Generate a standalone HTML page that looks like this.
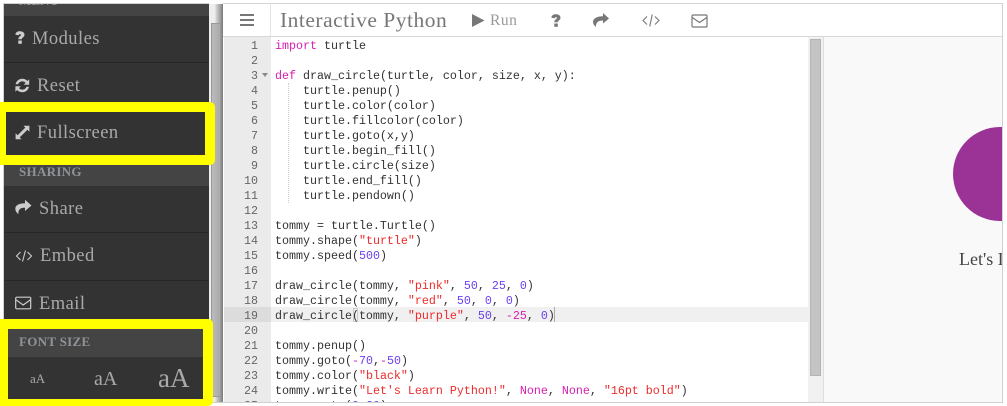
<!DOCTYPE html>
<html><head><meta charset="utf-8">
<style>
html,body{margin:0;padding:0;background:#fff}
#p{position:relative;width:1007px;height:406px;overflow:hidden;background:#fff;font-family:"Liberation Serif",serif}
#p div,#p svg{position:absolute}
.nav{color:#aaa;font-size:18.5px;letter-spacing:.45px;line-height:24px;white-space:nowrap}
.hd{color:#8f9499;font-size:13px;font-weight:bold;letter-spacing:.3px;line-height:16px;white-space:nowrap}
.ln{left:224px;width:34px;text-align:right;font:11.67px/15px "Liberation Mono",monospace;color:#666}
#code{left:275px;top:38px;font:11.67px/15px "Liberation Mono",monospace;color:#333;white-space:pre;margin:0}
.k{color:#d81eb0}.s{color:#ee2b2b}.n{color:#6b3ff0}
</style></head><body><div id="p">
<div style="left:4px;top:3px;width:205px;height:1px;background:#d0d0d0"></div>
<div style="left:3px;top:3px;width:1px;height:403px;background:#d0d0d0"></div>
<div style="left:4px;top:4px;width:205px;height:398px;background:#333"></div>
<div style="left:4px;top:4px;width:205px;height:12px;background:#444;overflow:hidden">
  <div style="left:15px;top:-11px;color:#8f9499;font-size:13px;font-weight:bold;letter-spacing:.1px;line-height:16px">MENU</div>
</div>
<div style="left:4px;top:62px;width:205px;height:1px;background:#272727"></div>
<div style="left:4px;top:165px;width:205px;height:21px;background:#444"></div>
<div style="left:4px;top:232px;width:205px;height:1px;background:#272727"></div>
<div style="left:4px;top:280px;width:205px;height:1px;background:#272727"></div>

<!-- sidebar scrollbar -->
<div style="left:209px;top:4px;width:14px;height:398px;background:linear-gradient(90deg,#eee 0,#eee 40%,#ccc 55%,#999 85%,#777 100%)"></div>
<div style="left:211px;top:23px;width:10px;height:374px;background:linear-gradient(90deg,#bbb,#aaa);border:1px solid #999;box-sizing:border-box"></div>
<div style="left:4px;top:402px;width:219px;height:1px;background:#d0d0d0"></div>

<!-- yellow boxes -->
<div style="left:-6px;top:102px;width:221px;height:63px;background:#ff0;border-radius:5px"></div>
<div style="left:6px;top:112px;width:199px;height:43px;background:#333"></div>
<div style="left:-6px;top:319px;width:219px;height:87px;background:#ff0;border-radius:5px"></div>
<div style="left:8px;top:329px;width:195px;height:28px;background:#444"></div>
<div style="left:8px;top:357px;width:195px;height:42px;background:#333"></div>

<div class="nav" style="left:32px;top:27px">Modules</div>
<div class="nav" style="left:37px;top:74px">Reset</div>
<div class="nav" style="left:37px;top:121px">Fullscreen</div>
<div class="hd" style="left:19px;top:164px">SHARING</div>
<div class="nav" style="left:39px;top:197px">Share</div>
<div class="nav" style="left:40px;top:244px">Embed</div>
<div class="nav" style="left:39px;top:292px">Email</div>
<div class="hd" style="left:19px;top:334px">FONT SIZE</div>
<div style="left:30px;top:371px;color:#aaa;font-size:13px;line-height:16px">aA</div>
<div style="left:94px;top:367px;color:#aaa;font-size:20px;line-height:24px">aA</div>
<div style="left:158px;top:362px;color:#aaa;font-size:27px;line-height:32px">aA</div>

<!-- sidebar icons -->
<svg style="left:15px;top:31px" width="10" height="13" viewBox="0 0 10 13"><path d="M.3 3.600C.8 1.200 2.600 .3 4.700 .3C7.500 .3 9.500 1.600 9.500 3.800C9.500 6.300 6.800 6.500 6.800 8.300H3.300C3.300 5.500 5.900 5.300 5.900 3.900C5.900 2.800 3.900 2.800 3.600 4.400Z" fill="#ccc"/><rect x="3.300" y="9.500" width="3.500" height="3.300" fill="#ccc"/></svg>
<svg style="left:15px;top:78px" width="15" height="15" viewBox="0 0 15 15"><path d="M.6 6.300C1.300 2.900 4 .8 7.300 .8C9.500 .8 11.200 1.700 12.500 3L14.200 1.300V6.800H8.700L10.600 4.900C9.700 4 8.600 3.400 7.300 3.400C5.300 3.400 3.700 4.600 3.100 6.300ZM.4 8.200H5.900L4 10.100C4.900 11 6 11.600 7.300 11.600C9.300 11.600 10.900 10.400 11.500 8.700H14C13.300 12.100 10.600 14.200 7.300 14.200C5.100 14.200 3.400 13.300 2.100 12L.4 13.700Z" fill="#ccc"/></svg>
<svg style="left:15px;top:125px" width="15" height="15" viewBox="0 0 15 15"><path d="M8.500 .8H14.400V6.700L12.400 4.700L4.700 12.400L6.500 14.200H.6V8.300L2.600 10.300L10.300 2.600Z" fill="#ccc"/></svg>
<svg style="left:15px;top:199px" width="17" height="16" viewBox="0 0 17 16"><path d="M10 .8L16.500 6.500L10 12V8.800C5.500 8.800 3.300 10 3.300 15.300C1.300 13.500 .3 11.500 .3 9.800C.3 6 4.500 4.300 10 4.300Z" fill="#ccc"/></svg>
<svg style="left:15px;top:249px" width="18" height="14" viewBox="0 0 18 14" fill="none" stroke="#ccc" stroke-width="1.100"><path d="M5.500 3L1.500 7L5.500 11M12.500 3L16.500 7L12.500 11M10.500 1.500L7.500 12.500"/></svg>
<svg style="left:15px;top:296px" width="17" height="14" viewBox="0 0 17 14" fill="none" stroke="#ccc" stroke-width="1.200"><rect x=".7" y="1.200" width="15" height="11.600" rx="1"/><path d="M1 3.800L8.200 9L15.500 3.800"/></svg>

<!-- main -->
<div style="left:223px;top:3px;width:780px;height:1px;background:#d4d4d4"></div>
<div style="left:223px;top:36px;width:780px;height:1px;background:#d8d8d8"></div>
<div style="left:223px;top:402px;width:780px;height:1px;background:#d0d0d0"></div>
<div style="left:1002px;top:3px;width:1px;height:400px;background:#d0d0d0"></div>
<div style="left:270px;top:4px;width:1px;height:32px;background:#e4e4e4"></div>
<div style="left:240px;top:14px;width:14px;height:2px;background:#777"></div>
<div style="left:240px;top:19px;width:14px;height:2px;background:#777"></div>
<div style="left:240px;top:24px;width:14px;height:2px;background:#777"></div>
<div style="left:280px;top:7px;font-size:21.5px;letter-spacing:.5px;line-height:26px;color:#777;white-space:nowrap">Interactive Python</div>
<svg style="left:472px;top:13px" width="13" height="15" viewBox="0 0 13 15"><path d="M0 1V14L12.500 7.500Z" fill="#777"/></svg>
<div style="left:490px;top:11px;font-size:15.500px;letter-spacing:.5px;line-height:20px;color:#999">Run</div>
<svg style="left:551px;top:14px" width="10" height="13" viewBox="0 0 10 13"><path d="M.3 3.600C.8 1.200 2.600 .3 4.700 .3C7.500 .3 9.500 1.600 9.500 3.800C9.500 6.300 6.800 6.500 6.800 8.300H3.300C3.300 5.500 5.900 5.300 5.900 3.900C5.900 2.800 3.900 2.800 3.600 4.400Z" fill="#777"/><rect x="3.300" y="9.500" width="3.500" height="3.300" fill="#777"/></svg>
<svg style="left:592px;top:12px" width="18" height="16" viewBox="0 0 18 16"><path d="M11 1L17 6.500L11 11.500V8.500C6.500 8.500 4 10 3.800 15C1.800 13 1 11.500 1 10C1 6.500 5 4.200 11 4.200Z" fill="#777"/></svg>
<svg style="left:642px;top:14px" width="18" height="13" viewBox="0 0 18 13" fill="none" stroke="#777" stroke-width="1.100"><path d="M5 2.500L1 6.500L5 10.500M13 2.500L17 6.500L13 10.500M10.300 .5L7.700 12.500"/></svg>
<svg style="left:691px;top:14px" width="18" height="14" viewBox="0 0 18 14" fill="none" stroke="#777" stroke-width="1.200"><rect x="1" y="1" width="15" height="12" rx="1"/><path d="M1.300 3.500L8.500 8.500L15.800 3.500"/></svg>

<!-- gutter -->
<div style="left:224px;top:37px;width:47px;height:365px;background:#ebebeb"></div>
<div style="left:224px;top:307px;width:47px;height:15px;background:#dcdcdc"></div>
<div style="left:271px;top:307px;width:538px;height:15px;background:#f0f0f0"></div>
<div class="ln" style="top:39px;height:363px;overflow:hidden;white-space:pre">1
2
3
4
5
6
7
8
9
10
11
12
13
14
15
16
17
18
19
20
21
22
23
24
25</div>
<svg style="left:262px;top:73px" width="6" height="4"><path d="M0 0H6L3 4Z" fill="#888"/></svg>
<div style="left:288px;top:83px;width:0;height:120px;border-left:1px dotted #ccc"></div>
<div style="left:353px;top:308px;width:5px;height:14px;border:1px solid #ccc;box-sizing:border-box"></div>
<div style="left:554px;top:307px;width:1px;height:15px;background:#aaa"></div>
<div id="code" style="top:39px;height:363px;overflow:hidden"><span class="k">import</span> turtle

<span class="k">def</span> draw_circle(turtle, color, size, x, y):
    turtle.penup()
    turtle.color(color)
    turtle.fillcolor(color)
    turtle.goto(x,y)
    turtle.begin_fill()
    turtle.circle(size)
    turtle.end_fill()
    turtle.pendown()

tommy = turtle.Turtle()
tommy.shape(<span class="s">"turtle"</span>)
tommy.speed(<span class="n">500</span>)

draw_circle(tommy, <span class="s">"pink"</span>, <span class="n">50</span>, <span class="n">25</span>, <span class="n">0</span>)
draw_circle(tommy, <span class="s">"red"</span>, <span class="n">50</span>, <span class="n">0</span>, <span class="n">0</span>)
draw_circle(tommy, <span class="s">"purple"</span>, <span class="n">50</span>, <span class="k">-</span><span class="k">25</span>, <span class="n">0</span>)

tommy.penup()
tommy.goto(<span class="k">-</span><span class="n">70</span>,<span class="k">-</span><span class="n">50</span>)
tommy.color(<span class="s">"black"</span>)
tommy.write(<span class="s">"Let's Learn Python!"</span>, <span class="k">None</span>, <span class="k">None</span>, <span class="s">"16pt bold"</span>)
tommy.goto(<span class="n">0</span>,<span class="n">30</span>)</div>

<!-- code scrollbar -->
<div style="left:808px;top:37px;width:15px;height:365px;background:#f1f1f1"></div>
<div style="left:810px;top:39px;width:11px;height:337px;background:#c4c4c4;border:1px solid #b4b4b4;box-sizing:border-box"></div>
<div style="left:823px;top:37px;width:1px;height:365px;background:#dedede"></div>

<!-- output -->
<div style="left:824px;top:37px;width:178px;height:365px;background:#f9f9f9;overflow:hidden">
  <div style="left:129px;top:90px;width:94px;height:94px;border-radius:50%;background:#9b3397"></div>
  <div style="left:135px;top:211px;font-size:18px;line-height:22px;color:#444;white-space:nowrap">Let's Learn Python!</div>
</div>
</div></body></html>
